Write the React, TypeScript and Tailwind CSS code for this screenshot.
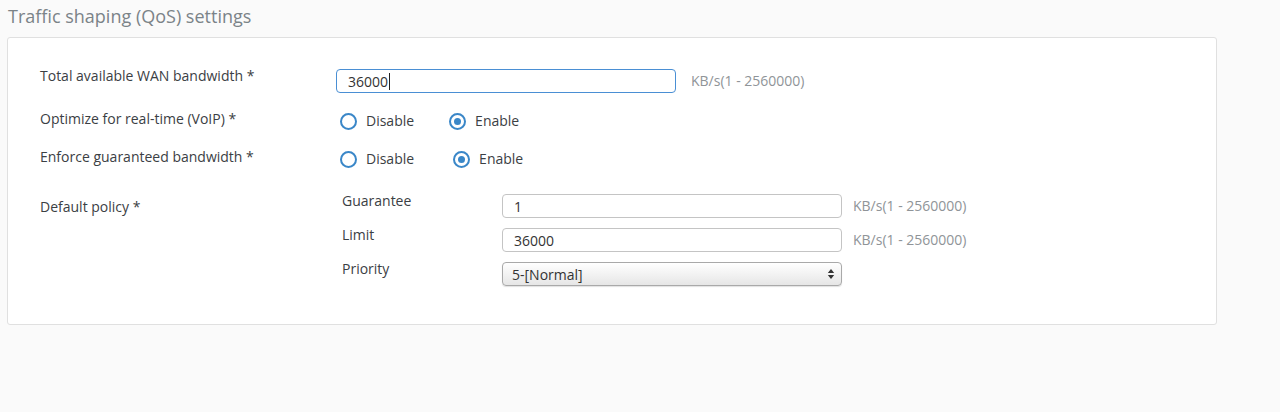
import React from "react";

/* LOGIC */

const font = { fontFamily: '"Open Sans", "Liberation Sans", sans-serif' };

function Radio({ checked, label, className }: { checked?: boolean; label: string; className?: string }) {
  return (
    <label className={`flex items-center gap-[9px] ${className ?? ""}`}>
      <span className="flex h-[17px] w-[17px] items-center justify-center rounded-full border-2 border-[#3a87c8] bg-white">
        {checked && <span className="h-[7px] w-[7px] rounded-full bg-[#3a87c8]" />}
      </span>
      <span className="text-[14px] leading-5 text-[#3b4044]">{label}</span>
    </label>
  );
}

function Hint({ className }: { className?: string }) {
  return (
    <div className={`mt-[2px] text-[14px] leading-5 text-[#8f9498] ${className ?? ""}`}>KB/s(1 - 2560000)</div>
  );
}

function TextBox({ value, focused, caret }: { value: string; focused?: boolean; caret?: boolean }) {
  return (
    <div
      className={`flex h-[24px] w-[340px] items-center rounded-[4px] border bg-white px-[11px] text-[14px] text-[#333] ${
        focused ? "border-[#4a8fd4]" : "border-[#c4c4c4]"
      }`}
    >
      {value}
      {caret && <span className="ml-[1px] h-[17px] w-[1px] bg-[#222]" />}
    </div>
  );
}

export default function App() {
  return (
    <div className="h-[412px] w-[1280px] bg-[#fafafa] pl-[7px] pt-[4px]" style={font}>
      <h1 className="pl-[1px] text-[18px] leading-6 text-[#7b8388]">Traffic shaping (QoS) settings</h1>

      <div className="mt-[9px] h-[288px] w-[1210px] rounded-[3px] border border-[#e0e0e0] bg-white pl-[32px] pt-[31px]">
        {/* WAN bandwidth */}
        <div className="flex items-start">
          <div className="-mt-[3px] w-[296px] text-[14px] leading-5 text-[#3b4044]">Total available WAN bandwidth *</div>
          <TextBox value="36000" focused caret />
          <Hint className="ml-[15px]" />
        </div>

        {/* VoIP */}
        <div className="mt-[18px] flex items-center">
          <div className="-mt-[4px] w-[300px] text-[14px] leading-5 text-[#3b4044]">Optimize for real-time (VoIP) *</div>
          <Radio label="Disable" />
          <Radio label="Enable" checked className="ml-[35px]" />
        </div>

        {/* Guaranteed */}
        <div className="mt-[18px] flex items-center">
          <div className="-mt-[4px] w-[300px] text-[14px] leading-5 text-[#3b4044]">Enforce guaranteed bandwidth *</div>
          <Radio label="Disable" />
          <Radio label="Enable" checked className="ml-[39px]" />
        </div>

        {/* Default policy */}
        <div className="mt-[25px] flex items-start">
          <div className="mt-[3px] w-[302px] text-[14px] leading-5 text-[#3b4044]">Default policy *</div>
          <div className="flex flex-col gap-[10px]">
            <div className="flex items-start">
              <div className="-mt-[3px] w-[160px] text-[14px] leading-5 text-[#3b4044]">Guarantee</div>
              <TextBox value="1" />
              <Hint className="ml-[11px]" />
            </div>
            <div className="flex items-start">
              <div className="-mt-[3px] w-[160px] text-[14px] leading-5 text-[#3b4044]">Limit</div>
              <TextBox value="36000" />
              <Hint className="ml-[11px]" />
            </div>
            <div className="flex items-start">
              <div className="-mt-[3px] w-[160px] text-[14px] leading-5 text-[#3b4044]">Priority</div>
              <div className="flex h-[24px] w-[340px] items-center justify-between rounded-[4px] border border-[#a9a9a9] bg-gradient-to-b from-white to-[#e6e6e6] pl-[9px] pr-[6px] text-[14px] text-[#333] shadow-[0_1px_1px_rgba(0,0,0,0.12)]">
                <span>5-[Normal]</span>
                <svg width="8" height="12" viewBox="0 0 8 12" aria-hidden>
                  <path d="M4 1 L7.2 5 H0.8 Z" fill="#333" />
                  <path d="M4 11 L7.2 7 H0.8 Z" fill="#333" />
                </svg>
              </div>
            </div>
          </div>
        </div>
      </div>
    </div>
  );
}
